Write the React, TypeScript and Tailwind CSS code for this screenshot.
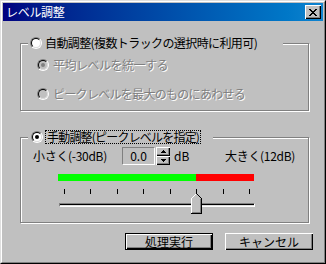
import React from 'react';

const raised = 'shadow-[inset_1px_1px_0_#fff,inset_-1px_-1px_0_#000,inset_-2px_-2px_0_#808080]';
const disabledText = 'text-[#808080] [text-shadow:1px_1px_0_#fff]';

interface RadioProps {
  checked?: boolean;
  disabled?: boolean;
}

const Radio: React.FC<RadioProps> = ({ checked = false, disabled = false }) => (
  <span className="relative inline-block w-[12px] h-[12px] shrink-0 rounded-full border border-t-[#808080] border-l-[#808080] border-b-white border-r-white">
    <span
      className={`absolute inset-0 rounded-full border border-t-black border-l-black border-b-[#dfdfdf] border-r-[#dfdfdf] ${
        disabled ? 'bg-[#c0c0c0]' : 'bg-white'
      }`}
    />
    {checked && (
      <span
        className={`absolute left-[3px] top-[3px] w-[4px] h-[4px] rounded-full ${
          disabled ? 'bg-[#808080]' : 'bg-black'
        }`}
      />
    )}
  </span>
);

const CloseGlyph = () => (
  <svg width="8" height="7" viewBox="0 0 8 7" shapeRendering="crispEdges">
    <rect x="0" y="0" width="2" height="1" />
    <rect x="6" y="0" width="2" height="1" />
    <rect x="1" y="1" width="2" height="1" />
    <rect x="5" y="1" width="2" height="1" />
    <rect x="2" y="2" width="4" height="1" />
    <rect x="3" y="3" width="2" height="1" />
    <rect x="2" y="4" width="4" height="1" />
    <rect x="1" y="5" width="2" height="1" />
    <rect x="5" y="5" width="2" height="1" />
    <rect x="0" y="6" width="2" height="1" />
    <rect x="6" y="6" width="2" height="1" />
  </svg>
);

const Arrow = ({ up }: { up: boolean }) => (
  <svg width="5" height="3" viewBox="0 0 5 3" shapeRendering="crispEdges">
    {up ? (
      <>
        <rect x="2" y="0" width="1" height="1" />
        <rect x="1" y="1" width="3" height="1" />
        <rect x="0" y="2" width="5" height="1" />
      </>
    ) : (
      <>
        <rect x="0" y="0" width="5" height="1" />
        <rect x="1" y="1" width="3" height="1" />
        <rect x="2" y="2" width="1" height="1" />
      </>
    )}
  </svg>
);

const Thumb = () => (
  <svg width="11" height="21" viewBox="0 0 11 21" shapeRendering="crispEdges">
    <polygon points="5,0 11,6 11,21 0,21 0,5" fill="#c0c0c0" />
    <polyline points="0.5,20 0.5,5.5 5.5,0.5" fill="none" stroke="#fff" />
    <polyline points="5.5,0.5 10.5,5.5 10.5,20.5 0,20.5" fill="none" stroke="#000" />
    <polyline points="9.5,6 9.5,19.5 1,19.5" fill="none" stroke="#808080" />
  </svg>
);

const ticks = [0, 1, 2, 3, 4, 5, 6, 7];

export default function App() {
  return (
    <div className="w-[326px] h-[264px] bg-[#c0c0c0] font-['Noto_Sans_CJK_JP',sans-serif] text-[12px] leading-none text-black border border-t-[#dfdfdf] border-l-[#dfdfdf] border-b-black border-r-black">
      <div className="h-full border border-t-white border-l-white border-b-[#808080] border-r-[#808080] p-[1px] flex flex-col">
        {/* title bar */}
        <div className="h-[18px] flex items-center justify-between bg-gradient-to-r from-[#000080] to-[#1084d0] pl-[3px] pr-[2px]">
          <span className="text-white tracking-[-0.3px]">レベル調整</span>
          <div className={`w-[16px] h-[14px] bg-[#c0c0c0] flex items-center justify-center ${raised}`}>
            <CloseGlyph />
          </div>
        </div>

        {/* auto group */}
        <div className="relative ml-[17px] mt-[22px] w-[289px] h-[68px] border border-[#808080] shadow-[inset_1px_1px_0_#fff,1px_1px_0_#fff] pt-[15px] pl-[16px]">
          <div className="absolute left-[7px] top-[-8px] h-[14px] w-[255px] bg-[#c0c0c0] flex items-center pl-[2px]">
            <Radio />
            <span className="ml-[3px] tracking-[-0.6px]">自動調整(複数トラックの選択時に利用可)</span>
          </div>
          <div className="flex items-center h-[12px]">
            <Radio checked disabled />
            <span className={`ml-[4px] tracking-[-0.5px] ${disabledText}`}>平均レベルを統一する</span>
          </div>
          <div className="flex items-center h-[12px] mt-[17px]">
            <Radio disabled />
            <span className={`ml-[4px] tracking-[-0.7px] ${disabledText}`}>ピークレベルを最大のものにあわせる</span>
          </div>
        </div>

        {/* manual group */}
        <div className="relative ml-[17px] mt-[26px] w-[289px] h-[86px] border border-[#808080] shadow-[inset_1px_1px_0_#fff,1px_1px_0_#fff] pt-[9px]">
          <div className="absolute left-[7px] top-[-8px] h-[14px] w-[185px] bg-[#c0c0c0] flex items-center pl-[3px]">
            <Radio checked />
            <span className="ml-[2px] h-[14px] flex items-center px-[1px] border border-dotted border-black tracking-[-0.8px]">
              手動調整(ピークレベルを指定)
            </span>
          </div>

          <div className="flex items-center h-[18px] pl-[12px]">
            <span className="w-[89px] tracking-[-0.3px]">小さく(-30dB)</span>
            <div className="w-[33px] h-[18px] flex items-center justify-center border border-t-[#808080] border-l-[#808080] border-b-white border-r-white">
              0.0
            </div>
            <div className="ml-[1px] w-[14px] h-[18px] flex flex-col">
              <div className={`h-[9px] bg-[#c0c0c0] flex items-center justify-center ${raised}`}>
                <Arrow up />
              </div>
              <div className={`h-[9px] bg-[#c0c0c0] flex items-center justify-center ${raised}`}>
                <Arrow up={false} />
              </div>
            </div>
            <span className="ml-[4px] w-[51px]">dB</span>
            <span className="tracking-[-0.3px]">大きく(12dB)</span>
          </div>

          <div className="ml-[37px] mt-[9px] w-[196px] h-[7px] flex">
            <div className="w-[138px] bg-[#00ff00]" />
            <div className="flex-1 bg-[#ff0000]" />
          </div>

          <div className="relative ml-[37px] mt-[8px] w-[197px] h-[26px]">
            <div className="flex justify-between pl-[6px] pr-[5px]">
              {ticks.map((t) => (
                <div key={t} className="w-[1px] h-[5px] bg-black" />
              ))}
            </div>
            <div className="ml-[1px] mt-[9px] w-[196px] h-[4px] bg-[#dfdfdf] border border-t-[#808080] border-l-[#808080] border-b-white border-r-white shadow-[inset_0_1px_0_#000]" />
            <div className="absolute left-[133px] top-[4px]">
              <Thumb />
            </div>
          </div>
        </div>

        {/* buttons */}
        <div className="mt-[10px] flex justify-end gap-[12px] pr-[10px]">
          <button className={`w-[88px] h-[17px] bg-[#c0c0c0] border border-black flex items-center justify-center ${raised}`}>
            処理実行
          </button>
          <button className={`w-[88px] h-[17px] bg-[#c0c0c0] flex items-center justify-center ${raised}`}>
            キャンセル
          </button>
        </div>
      </div>
    </div>
  );
}
